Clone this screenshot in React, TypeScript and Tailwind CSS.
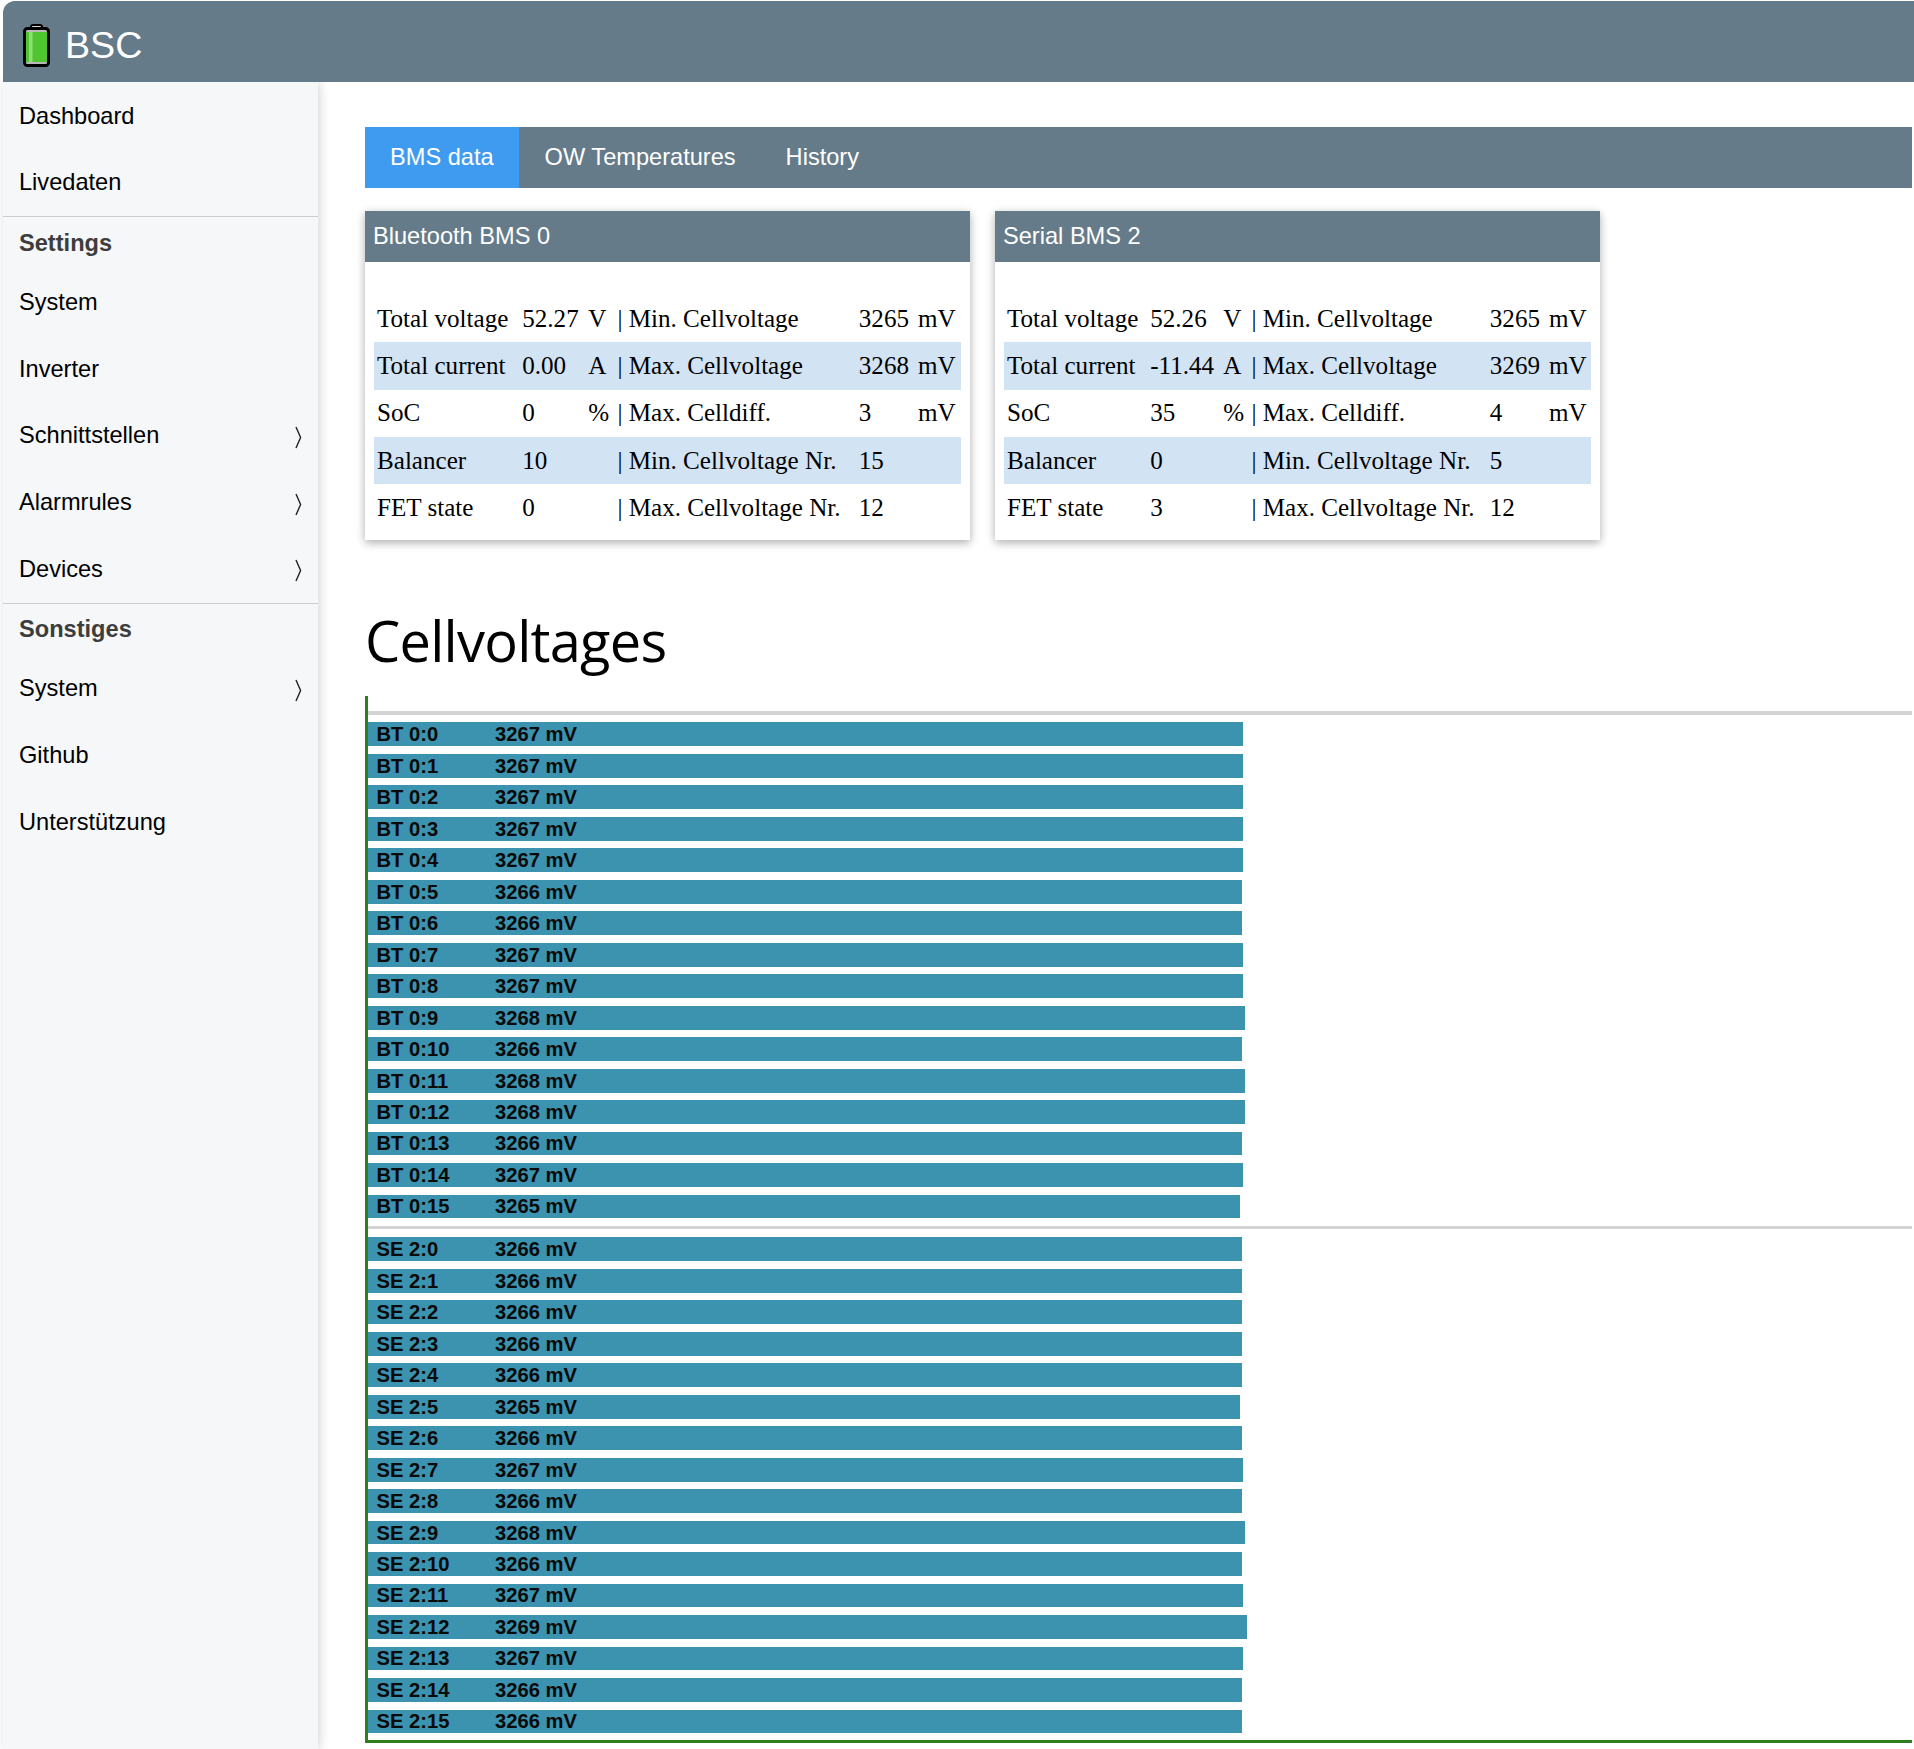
type Row = [string, string, string, string, string, string]

const bms0: Row[] = [
  ['Total voltage', '52.27', 'V', 'Min. Cellvoltage', '3265', 'mV'],
  ['Total current', '0.00', 'A', 'Max. Cellvoltage', '3268', 'mV'],
  ['SoC', '0', '%', 'Max. Celldiff.', '3', 'mV'],
  ['Balancer', '10', '', 'Min. Cellvoltage Nr.', '15', ''],
  ['FET state', '0', '', 'Max. Cellvoltage Nr.', '12', ''],
]

const bms2: Row[] = [
  ['Total voltage', '52.26', 'V', 'Min. Cellvoltage', '3265', 'mV'],
  ['Total current', '-11.44', 'A', 'Max. Cellvoltage', '3269', 'mV'],
  ['SoC', '35', '%', 'Max. Celldiff.', '4', 'mV'],
  ['Balancer', '0', '', 'Min. Cellvoltage Nr.', '5', ''],
  ['FET state', '3', '', 'Max. Cellvoltage Nr.', '12', ''],
]

const btCells = [3267, 3267, 3267, 3267, 3267, 3266, 3266, 3267, 3267, 3268, 3266, 3268, 3268, 3266, 3267, 3265]
const seCells = [3266, 3266, 3266, 3266, 3266, 3265, 3266, 3267, 3266, 3268, 3266, 3267, 3269, 3267, 3266, 3266]

function BatteryIcon() {
  return (
    <svg width="27" height="43" viewBox="0 0 27 43" className="shrink-0">
      <rect x="8" y="1" width="11" height="6" rx="2" fill="#d8d8d8" stroke="#000" strokeWidth="2" />
      <rect x="1.5" y="4.5" width="24" height="37" rx="3" fill="#b8b8b8" stroke="#000" strokeWidth="3" />
      <rect x="3" y="8" width="21" height="30" fill="#4fc52f" />
      <rect x="6" y="8" width="3.5" height="30" fill="#8fdc78" />
    </svg>
  )
}

function Chevron() {
  return (
    <svg width="7" height="23" viewBox="0 0 7 23" className="mt-[3px]">
      <path d="M1 1 L5.6 11.5 L1 22" fill="none" stroke="#222" strokeWidth="1.4" />
    </svg>
  )
}

function NavItem({ label, arrow }: { label: string; arrow?: boolean }) {
  return (
    <div className="h-[66.7px] flex items-center justify-between pl-[16px] pr-[16px] text-[23.6px] text-black">
      <span>{label}</span>
      {arrow && <Chevron />}
    </div>
  )
}

function NavHeading({ label }: { label: string }) {
  return (
    <div className="h-[52px] flex items-center px-[16px] text-[23.6px] font-bold text-[#3d3d3d]">
      {label}
    </div>
  )
}

function BmsCard({ title, rows, cols }: { title: string; rows: Row[]; cols: number[] }) {
  return (
    <div className="w-[605px] bg-white shadow-[0_3px_8px_rgba(0,0,0,0.22),0_2px_10px_rgba(0,0,0,0.12)]">
      <div className="h-[51px] bg-[#657b89] text-white text-[23.6px] flex items-center px-[8px]">{title}</div>
      <div className="px-[9px] pt-[33px] pb-[9px]">
        <table className="w-full table-fixed border-collapse font-['Liberation_Serif',serif] text-[25.1px] text-black">
          <colgroup>
            {cols.map((w, i) => (
              <col key={i} style={{ width: w }} />
            ))}
          </colgroup>
          <tbody>
            {rows.map((r, i) => (
              <tr key={i} className={`h-[47.3px] ${i % 2 === 1 ? 'bg-[#d2e3f4]' : ''}`}>
                <td className="pl-[3px] whitespace-nowrap">{r[0]}</td>
                <td className="pl-[2px] whitespace-nowrap">{r[1]}</td>
                <td className="pl-[2px] whitespace-nowrap">{r[2]}</td>
                <td className="pl-[2px] whitespace-nowrap">| {r[3]}</td>
                <td className="pl-[2px] whitespace-nowrap">{r[4]}</td>
                <td className="pl-[2px] whitespace-nowrap">{r[5]}</td>
              </tr>
            ))}
          </tbody>
        </table>
      </div>
    </div>
  )
}

function CellBar({ label, value }: { label: string; value: number }) {
  // bar length follows the cell voltage
  const width = 872.2 + (value - 3265) * 1.6
  return (
    <div
      className="h-[23.7px] bg-[#3b93b0] flex items-center pl-[8.5px] text-[20.2px] font-bold text-[#0a0a0a] whitespace-nowrap"
      style={{ width }}
    >
      <span className="w-[118.5px]">{label}</span>
      <span>{value} mV</span>
    </div>
  )
}

function CellGroup({ prefix, cells }: { prefix: string; cells: number[] }) {
  return (
    <div className="flex flex-col gap-[7.8px]">
      {cells.map((v, i) => (
        <CellBar key={i} label={`${prefix}:${i}`} value={v} />
      ))}
    </div>
  )
}

export default function App() {
  return (
    <div className="w-[1914px] h-[1749px] overflow-hidden pl-[3px] pt-[1px] bg-white flex flex-col font-['Liberation_Sans',sans-serif]">
      {/* Header */}
      <div className="relative z-10 h-[81px] shrink-0 bg-[#657b89] rounded-tl-[12px] flex items-center pl-[20px] pt-[8px] gap-[15px] text-white text-[37.6px]">
        <BatteryIcon />
        <span>BSC</span>
      </div>

      <div className="flex flex-1 min-h-0">
        {/* Sidebar */}
        <div className="w-[315px] shrink-0 pt-[1px] bg-[#f5f7f9] shadow-[2px_0_10px_rgba(0,0,0,0.16)]">
          <NavItem label="Dashboard" />
          <NavItem label="Livedaten" />
          <div className="border-t border-[#cccccc]" />
          <NavHeading label="Settings" />
          <NavItem label="System" />
          <NavItem label="Inverter" />
          <NavItem label="Schnittstellen" arrow />
          <NavItem label="Alarmrules" arrow />
          <NavItem label="Devices" arrow />
          <div className="border-t border-[#cccccc]" />
          <NavHeading label="Sonstiges" />
          <NavItem label="System" arrow />
          <NavItem label="Github" />
          <NavItem label="Unterstützung" />
        </div>

        {/* Main */}
        <div className="flex-1 min-w-0 pl-[47px] pr-[2px] pt-[45px]">
          <div className="h-[61px] bg-[#657b89] flex text-white text-[23.6px]">
            <div className="bg-[#3f9bef] px-[25px] flex items-center">BMS data</div>
            <div className="pl-[26px] pr-[25px] flex items-center">OW Temperatures</div>
            <div className="pl-[25px] flex items-center">History</div>
          </div>

          <div className="flex gap-[25px] mt-[23px]">
            <BmsCard title="Bluetooth BMS 0" rows={bms0} cols={[146, 66, 29, 241, 59, 45]} />
            <BmsCard title="Serial BMS 2" rows={bms2} cols={[144, 73, 28, 238, 59, 44]} />
          </div>

          <h1 className="mt-[64px] h-[72px] flex items-center text-[56px] tracking-[-0.75px] text-black font-['Open_Sans',sans-serif] leading-none">
            Cellvoltages
          </h1>

          <div className="mt-[20px] h-[1047px] border-l-[3px] border-b-[3px] border-[#2f7d1f] pt-[15px]">
            <div className="h-[4px] bg-[#d3d3d3]" />
            <div className="mt-[7px]">
              <CellGroup prefix="BT 0" cells={btCells} />
            </div>
            <div className="h-[3px] bg-[#d3d3d3] mt-[8px]" />
            <div className="mt-[8px]">
              <CellGroup prefix="SE 2" cells={seCells} />
            </div>
          </div>
        </div>
      </div>
    </div>
  )
}
